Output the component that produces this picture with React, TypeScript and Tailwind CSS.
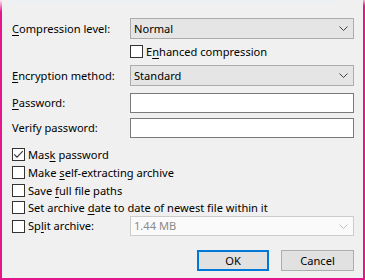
import React from "react";

const Chevron = ({ color = "#404040" }: { color?: string }) => (
  <svg width="9" height="5" viewBox="0 0 9 5" fill="none">
    <path d="M0.5 0.5 L4.5 4.5 L8.5 0.5" stroke={color} strokeWidth="1" />
  </svg>
);

const Check = ({ checked = false }: { checked?: boolean }) => (
  <div className="w-[13px] h-[13px] border border-[#333333] bg-white flex items-center justify-center shrink-0">
    {checked && (
      <svg width="11" height="11" viewBox="0 0 11 11" fill="none">
        <path d="M1.2 5.3 L4 8.2 L9.8 2.2" stroke="#333333" strokeWidth="1.1" />
      </svg>
    )}
  </div>
);

const Combo = ({ value }: { value: string }) => (
  <div className="w-[224px] h-[21px] border border-[#acacac] bg-[#e5e5e5] flex items-center justify-between pl-[3px] pr-[5px]">
    <span>{value}</span>
    <Chevron />
  </div>
);

const Input = () => <div className="w-[224px] h-[20px] border border-[#7a7a7a] bg-white" />;

const CheckRow = ({
  checked,
  children,
  className = "",
}: {
  checked?: boolean;
  children: React.ReactNode;
  className?: string;
}) => (
  <div className={"flex items-center h-[13px] gap-[3px] " + className}>
    <Check checked={checked} />
    <span className="leading-none">{children}</span>
  </div>
);

export default function App() {
  return (
    <div className="w-[365px] h-[280px] flex flex-col bg-[#f0f0f0] text-black text-[11.1px] font-['Segoe_UI','Noto_Sans',sans-serif] leading-none">
      <div className="flex flex-1">
        <div className="w-[2px] bg-[linear-gradient(to_bottom,#fbe6f2,#e5168d_12px)]" />
        <div className="flex-1 flex flex-col pl-[10px]">
          <div className="h-[3px] pt-[1px] pr-[26px]">
            <div className="h-[1px] bg-[#e6eef7]" />
          </div>
          <div className="mt-[15px] flex items-center h-[21px]">
            <div className="w-[118px]">
              <u className="underline-offset-2">C</u>ompression level:
            </div>
            <Combo value="Normal" />
          </div>
          <div className="mt-[6px] flex h-[13px]">
            <div className="w-[118px]" />
            <CheckRow>
              E<u className="underline-offset-2">n</u>hanced compression
            </CheckRow>
          </div>
          <div className="mt-[7px] flex items-center h-[21px]">
            <div className="w-[118px]">
              <u className="underline-offset-2">E</u>ncryption method:
            </div>
            <Combo value="Standard" />
          </div>
          <div className="mt-[7px] flex items-center h-[20px]">
            <div className="w-[118px]">
              <u className="underline-offset-2">P</u>assword:
            </div>
            <Input />
          </div>
          <div className="mt-[5px] flex items-center h-[20px]">
            <div className="w-[118px]">Verify password:</div>
            <Input />
          </div>
          <CheckRow checked className="mt-[10px]">
            Mas<u className="underline-offset-2">k</u> password
          </CheckRow>
          <CheckRow className="mt-[5px]">
            Make <u className="underline-offset-2">s</u>elf-extracting archive
          </CheckRow>
          <CheckRow className="mt-[5px]">
            Save <u className="underline-offset-2">f</u>ull file paths
          </CheckRow>
          <CheckRow className="mt-[4px]">
            Set archive <u className="underline-offset-2">d</u>ate to date of newest file within it
          </CheckRow>
          <div className="mt-[2px] flex items-center h-[20px]">
            <div className="w-[118px] flex items-center gap-[3px]">
              <Check />
              <span>
                Sp<u className="underline-offset-2">l</u>it archive:
              </span>
            </div>
            <div className="w-[224px] h-[20px] border border-[#cccccc] bg-[#fafafa] flex items-center">
              <span className="flex-1 pl-[3px] text-[#8a8a8a]">1.44 MB</span>
              <div className="w-[19px] h-full flex items-center justify-center">
                <Chevron color="#bfbfbf" />
              </div>
            </div>
          </div>
          <div className="mt-[14px] flex justify-end gap-[12px] pr-[9px]">
            <div className="w-[72px] h-[21px] border-2 border-[#0078d7] bg-[#e1e1e1] flex items-center justify-center">
              OK
            </div>
            <div className="w-[73px] h-[21px] border border-[#adadad] bg-[#e1e1e1] flex items-center justify-center">
              Cancel
            </div>
          </div>
        </div>
        <div className="w-[2px] bg-[linear-gradient(to_bottom,#f3b3d8,#e5168d_6px)]" />
      </div>
      <div className="h-[2px] bg-[#e5168d]" />
    </div>
  );
}
